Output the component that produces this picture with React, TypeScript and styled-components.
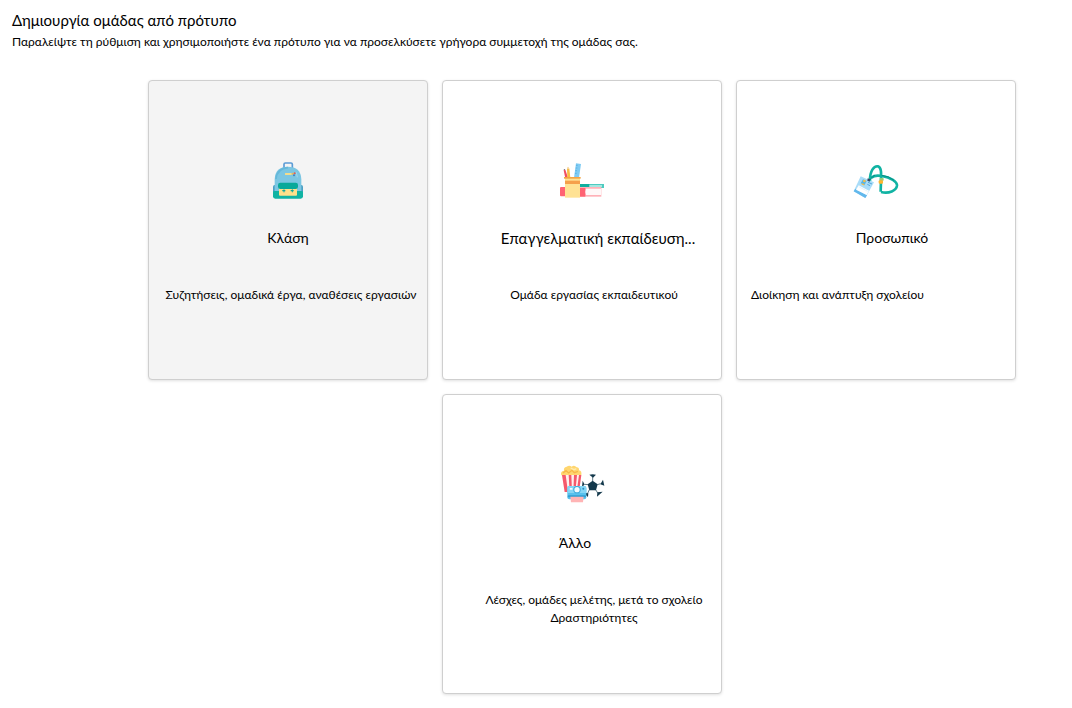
import React from 'react';
import styled, { createGlobalStyle } from 'styled-components';

const GlobalStyle = createGlobalStyle`
  *, *::before, *::after {
    box-sizing: border-box;
  }

  body {
    margin: 0;
    background: #ffffff;
    color: #000000;
    font-family: Lato, 'Liberation Sans', Arial, sans-serif;
  }
`;

const Page = styled.main`
  display: flex;
  flex-direction: column;
  gap: 25px;
  padding: 11px 0 14px;
`;

const Header = styled.header`
  padding: 0 12px;
`;

const Heading = styled.h1`
  margin: 0;
  font-size: 15px;
  font-weight: 400;
  line-height: 18px;
`;

const Subheading = styled.p`
  margin: 0;
  font-size: 12px;
  line-height: 26px;
`;

const TemplateGrid = styled.section`
  display: flex;
  flex-wrap: wrap;
  justify-content: center;
  gap: 14px;
  padding-left: 92px;
`;

const TemplateCard = styled.button<{ $active?: boolean }>`
  display: flex;
  flex-direction: column;
  align-items: stretch;
  justify-content: center;
  width: 280px;
  min-height: 300px;
  padding: 0;
  border: 1px solid #cfcfcf;
  border-radius: 4px;
  background: ${(p) => (p.$active ? '#f4f4f4' : '#ffffff')};
  box-shadow: 0 1px 3px rgba(0, 0, 0, 0.12);
  color: inherit;
  font-family: inherit;
  cursor: pointer;

  &:hover {
    background: #f4f4f4;
  }
`;

const Icon = styled.svg`
  display: block;
  align-self: center;
  width: 48px;
  height: 48px;
`;

const titlePadding = {
  center: '0',
  start: '0 14px 0 0',
  end: '0 0 0 32px',
};

const CardTitle = styled.span<{ $lean?: keyof typeof titlePadding; $large?: boolean }>`
  margin-top: 23px;
  padding: ${(p) => titlePadding[p.$lean ?? 'center']};
  font-size: ${(p) => (p.$large ? '15px' : '14px')};
  line-height: 20px;
`;

const CardText = styled.span<{ $inset?: boolean; $start?: boolean }>`
  margin-top: 38px;
  padding: 0 8px 0 ${(p) => (p.$inset ? '32px' : '14px')};
  font-size: 12px;
  line-height: 18px;
  text-align: ${(p) => (p.$start ? 'left' : 'center')};
`;

const Backpack = () => (
  <Icon viewBox="18 18 144 144" aria-hidden="true">
    <path d="M78 52V40q0-4 4-4h17q4 0 4 4v12" fill="none" stroke="#5b9bd5" strokeWidth="5" />
    <rect x="45" y="102" width="12" height="26" rx="5" fill="#4a9fc4" />
    <rect x="123" y="102" width="12" height="26" rx="5" fill="#4a9fc4" />
    <path d="M50 140V84q2-37 40-37t40 37v56z" fill="#7cc6e2" />
    <path d="M54 84q3-32 36-34" fill="none" stroke="#65b8da" strokeWidth="5" />
    <path d="M45 124q0-4 5-4h80q5 0 5 4v12q0 7-7 7H52q-7 0-7-7z" fill="#10b3a3" />
    <rect x="63" y="108" width="54" height="26" rx="3" fill="#ffe08a" />
    <rect x="60" y="95" width="60" height="19" rx="7" fill="#08a99a" />
    <path d="M73 119h9M98 119h9" stroke="#10a99b" strokeWidth="4" />
    <path d="M78 115v9M103 115v9" stroke="#10a99b" strokeWidth="3" />
    <rect x="81" y="66" width="20" height="6" rx="1" fill="#f3dc8c" />
    <circle cx="104" cy="68" r="3" fill="#f2b84b" />
    <circle cx="110" cy="67" r="3" fill="#e8584f" />
    <circle cx="108" cy="73" r="3" fill="#3b82c4" />
    <path d="M115 64l3 15" stroke="#b4e4f3" strokeWidth="2" />
  </Icon>
);

const Supplies = () => (
  <Icon viewBox="24 18 144 144" aria-hidden="true">
    <path d="M41 58l5-2 8 24-8 2z" fill="#f04e62" />
    <path d="M41 58l1-4 4 2z" fill="#4b4b5a" />
    <path d="M51 53l3-6 4 6 3 27h-9z" fill="#f8bd43" />
    <path d="M51 53l3-6 4 6z" fill="#f5ddc4" />
    <path d="M78 37l15 2-6 41H72z" fill="#7fcbf3" />
    <path d="M78 43h5M77 51h5M76 59h5M75 67h5" stroke="#4aa8dc" strokeWidth="2" />
    <rect x="30" y="108" width="18" height="28" rx="3" fill="#ff6373" />
    <rect x="90" y="99" width="72" height="12" fill="#4ecbc0" />
    <rect x="90" y="99" width="28" height="10" fill="#0faf9f" />
    <path d="M118 105h38" stroke="#d1f6f2" strokeWidth="4" />
    <path d="M89 108h65v29H89z" fill="#ffb1b8" />
    <path d="M89 111h17v26H89z" fill="#ff6373" />
    <path d="M108 113h45v19h-45q-4-9 0-19z" fill="#fff8f8" />
    <rect x="45" y="81" width="45" height="59" fill="#ffe294" />
    <rect x="42" y="78" width="50" height="5" fill="#f4a443" />
    <rect x="45" y="89" width="45" height="10" fill="#f5a04b" />
  </Icon>
);

const Lanyard = () => (
  <Icon viewBox="21 18 144 144" aria-hidden="true">
    <path
      d="M75 90C74 60 87 44 99 46c13 3 9 28 8 76M79 80q10-9 32-5c26 4 46 18 45 29-2 15-24 25-48 19"
      fill="none"
      stroke="#10b3a3"
      strokeWidth="8"
    />
    <path d="M90 73q-9 3-14 13M110 73q22 2 37 15" fill="none" stroke="#078f86" strokeWidth="3" />
    <path d="M47 76l40 18-26 47-35-20z" fill="#a9dcf8" />
    <path d="M26 121l5-8 35 20-5 8z" fill="#62b8ec" />
    <path d="M41 103l31 16-7 13-32-16z" fill="#ffffff" />
    <path d="M41 107l27 14" stroke="#d7eefa" strokeWidth="2" />
    <path d="M54 85l11 5-7 13-11-6z" fill="#55b5e8" />
    <circle cx="58" cy="90" r="4" fill="#f1bd4b" />
    <path d="M50 98l8 4" stroke="#f1bd4b" strokeWidth="4" />
    <path d="M69 94l12 5M67 100l8 4" stroke="#55a9dc" strokeWidth="3" />
    <path d="M68 82l8 3-2 7-7-3z" fill="#344b67" />
    <rect x="104" y="81" width="12" height="8" rx="2" fill="#9ccc72" />
    <rect x="101" y="88" width="13" height="10" rx="3" fill="#ffb52e" />
  </Icon>
);

const Leisure = () => (
  <Icon viewBox="24 20 144 144" aria-hidden="true">
    <path
      d="M34 60q-4-12 8-14-2-10 8-12 8-5 15 0 8-6 15 2 8 0 7 9 9 1 7 14z"
      fill="#ffd66f"
    />
    <path d="M39 53l9-7 8 7 10-8 7 7 11-4" fill="none" stroke="#f7b84b" strokeWidth="4" />
    <path d="M62 38l10 5 7-3" fill="none" stroke="#ffebb0" strokeWidth="4" />
    <path d="M36 59h58l-7 51H44z" fill="#fff0ee" />
    <path d="M36 59h11l7 51H44zM56 59h8l2 51h-7zM72 59h9l-5 51h-6zM87 59h7l-7 51h-7z" fill="#f5596c" />
    <path d="M128 76l15 11-5 18h-20l-5-18z" fill="#14394c" />
    <path
      d="M118 58q10-3 20 0l-9 9zM159 73l4 18-12-4zM158 109l-17 15 1-13zM114 125l-14-13 15 2zM98 76l6 12-8 6z"
      fill="#14394c"
    />
    <path
      d="M128 65v12M142 88l10-3M137 103l6 10M118 103l-5 11M114 88l-10-1"
      stroke="#14394c"
      strokeWidth="2"
    />
    <rect x="52" y="92" width="57" height="40" rx="6" fill="#58c1ed" />
    <path d="M52 98q0-6 6-6h45q6 0 6 6v15H52z" fill="#85d6f5" />
    <rect x="59" y="98" width="9" height="5" rx="2" fill="#f4fcff" />
    <circle cx="81" cy="103" r="11" fill="#3aa7da" />
    <circle cx="81" cy="103" r="8" fill="#f2fbff" />
    <circle cx="100" cy="100" r="3" fill="#278fc3" />
    <rect x="53" y="120" width="55" height="6" rx="3" fill="#319fd2" />
    <path d="M61 124h40l-2 17H63z" fill="#ffb4b5" />
  </Icon>
);

export default function App() {
  return (
    <>
      <GlobalStyle />
      <Page>
        <Header>
          <Heading>Δημιουργία ομάδας από πρότυπο</Heading>
          <Subheading>
            Παραλείψτε τη ρύθμιση και χρησιμοποιήστε ένα πρότυπο για να προσελκύσετε γρήγορα συμμετοχή της ομάδας σας.
          </Subheading>
        </Header>
        <TemplateGrid>
          <TemplateCard type="button" $active>
            <Backpack />
            <CardTitle>Κλάση</CardTitle>
            <CardText>Συζητήσεις, ομαδικά έργα, αναθέσεις εργασιών</CardText>
          </TemplateCard>
          <TemplateCard type="button">
            <Supplies />
            <CardTitle $lean="end" $large>
              Επαγγελματική εκπαίδευση...
            </CardTitle>
            <CardText $inset>Ομάδα εργασίας εκπαιδευτικού</CardText>
          </TemplateCard>
          <TemplateCard type="button">
            <Lanyard />
            <CardTitle $lean="end">Προσωπικό</CardTitle>
            <CardText $start>Διοίκηση και ανάπτυξη σχολείου</CardText>
          </TemplateCard>
          <TemplateCard type="button">
            <Leisure />
            <CardTitle $lean="start">Άλλο</CardTitle>
            <CardText $inset>
              Λέσχες, ομάδες μελέτης, μετά το σχολείο
              <br />
              Δραστηριότητες
            </CardText>
          </TemplateCard>
        </TemplateGrid>
      </Page>
    </>
  );
}
